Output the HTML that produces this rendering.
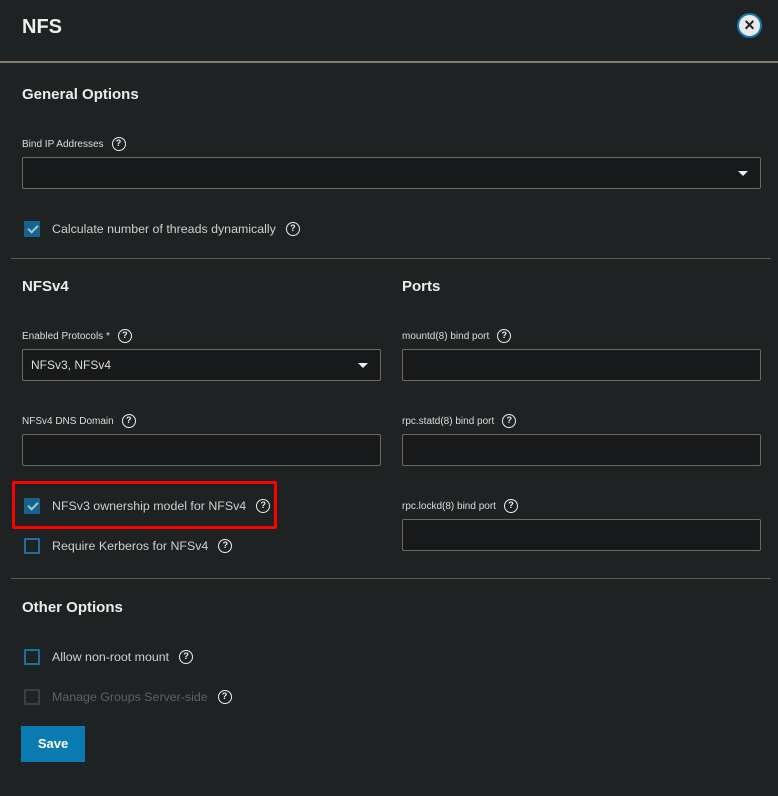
<!DOCTYPE html>
<html><head><style>
*{margin:0;padding:0;box-sizing:border-box}
body{width:778px;height:796px;background:#1f2223;font-family:"Liberation Sans",sans-serif;color:#e6e6e6;position:relative;overflow:hidden}
.a{position:absolute}
h1{position:absolute;left:22px;top:16px;font-size:20px;font-weight:bold;color:#eee}
.h{position:absolute;font-size:15px;font-weight:bold;color:#ececec}
.l{position:absolute;font-size:10px;color:#ddd;display:flex;align-items:center;gap:8px}
.in{position:absolute;height:32px;background:#18191a;border:1px solid #6e6860;border-radius:2px;font-size:12px;color:#ddd;padding:8px 0 0 8px}
.q{display:inline-block;width:14px;height:14px;border:1.7px solid #eee;border-radius:50%;font-size:9px;font-weight:bold;text-align:center;line-height:11px;color:#eee}
.c{position:absolute;display:flex;align-items:center;font-size:12.4px;color:#cfcfcf}
.b{width:16px;height:16px;border:2px solid #1d6fa0;border-radius:1px;margin-right:12px;position:relative}
.b.on{background:#17628f;border-color:#17628f}
.b.on:after{content:"";position:absolute;left:4px;top:0px;width:4px;height:8px;border:solid #9cc;border-width:0 2px 2px 0;transform:rotate(45deg)}
.c .q{margin-left:10px}
.arr{position:absolute;right:12px;top:13px;border:5px solid transparent;border-top:5px solid #eee;border-bottom:0}
.hr{position:absolute;height:1px;background:#5c5853}
</style></head><body>
<h1>NFS</h1>
<div class="a" style="left:737px;top:13px;width:25px;height:25px;border-radius:50%;border:2px solid #1278b0;background:#eaeaea;color:#222;font-size:18px;line-height:20px;text-align:center;font-weight:bold">×</div>
<div class="a" style="left:0;top:61px;width:778px;height:2px;background:#877c71"></div>
<div class="h" style="left:22px;top:86px">General Options</div>
<div class="l" style="left:22px;top:137px">Bind IP Addresses <span class="q">?</span></div>
<div class="in" style="left:22px;top:157px;width:739px"><span class="arr"></span></div>
<div class="c" style="left:24px;top:221px"><span class="b on"></span>Calculate number of threads dynamically<span class="q">?</span></div>
<div class="hr" style="left:11px;top:258px;width:760px"></div>
<div class="h" style="left:22px;top:278px">NFSv4</div>
<div class="h" style="left:402px;top:278px">Ports</div>
<div class="l" style="left:22px;top:329px">Enabled Protocols * <span class="q">?</span></div>
<div class="in" style="left:22px;top:349px;width:359px">NFSv3, NFSv4<span class="arr"></span></div>
<div class="l" style="left:22px;top:414px">NFSv4 DNS Domain <span class="q">?</span></div>
<div class="in" style="left:22px;top:434px;width:359px"></div>
<div class="l" style="left:402px;top:329px">mountd(8) bind port <span class="q">?</span></div>
<div class="in" style="left:402px;top:349px;width:359px"></div>
<div class="l" style="left:402px;top:414px">rpc.statd(8) bind port <span class="q">?</span></div>
<div class="in" style="left:402px;top:434px;width:359px"></div>
<div class="l" style="left:402px;top:499px">rpc.lockd(8) bind port <span class="q">?</span></div>
<div class="in" style="left:402px;top:519px;width:359px"></div>
<div class="a" style="left:12px;top:481px;width:265px;height:48px;border:3px solid #f00;border-radius:2px"></div>
<div class="c" style="left:24px;top:498px"><span class="b on"></span>NFSv3 ownership model for NFSv4<span class="q">?</span></div>
<div class="c" style="left:24px;top:538px"><span class="b"></span>Require Kerberos for NFSv4<span class="q">?</span></div>
<div class="hr" style="left:11px;top:578px;width:760px"></div>
<div class="h" style="left:22px;top:599px">Other Options</div>
<div class="c" style="left:24px;top:649px"><span class="b"></span>Allow non-root mount<span class="q">?</span></div>
<div class="c" style="left:24px;top:689px;color:#5e6062"><span class="b" style="border-color:#3c3f41"></span>Manage Groups Server-side<span class="q">?</span></div>
<div class="a" style="left:21px;top:726px;width:64px;height:36px;background:#0a7bb0;color:#fff;font-weight:bold;font-size:13px;text-align:center;line-height:36px">Save</div>
</body></html>
